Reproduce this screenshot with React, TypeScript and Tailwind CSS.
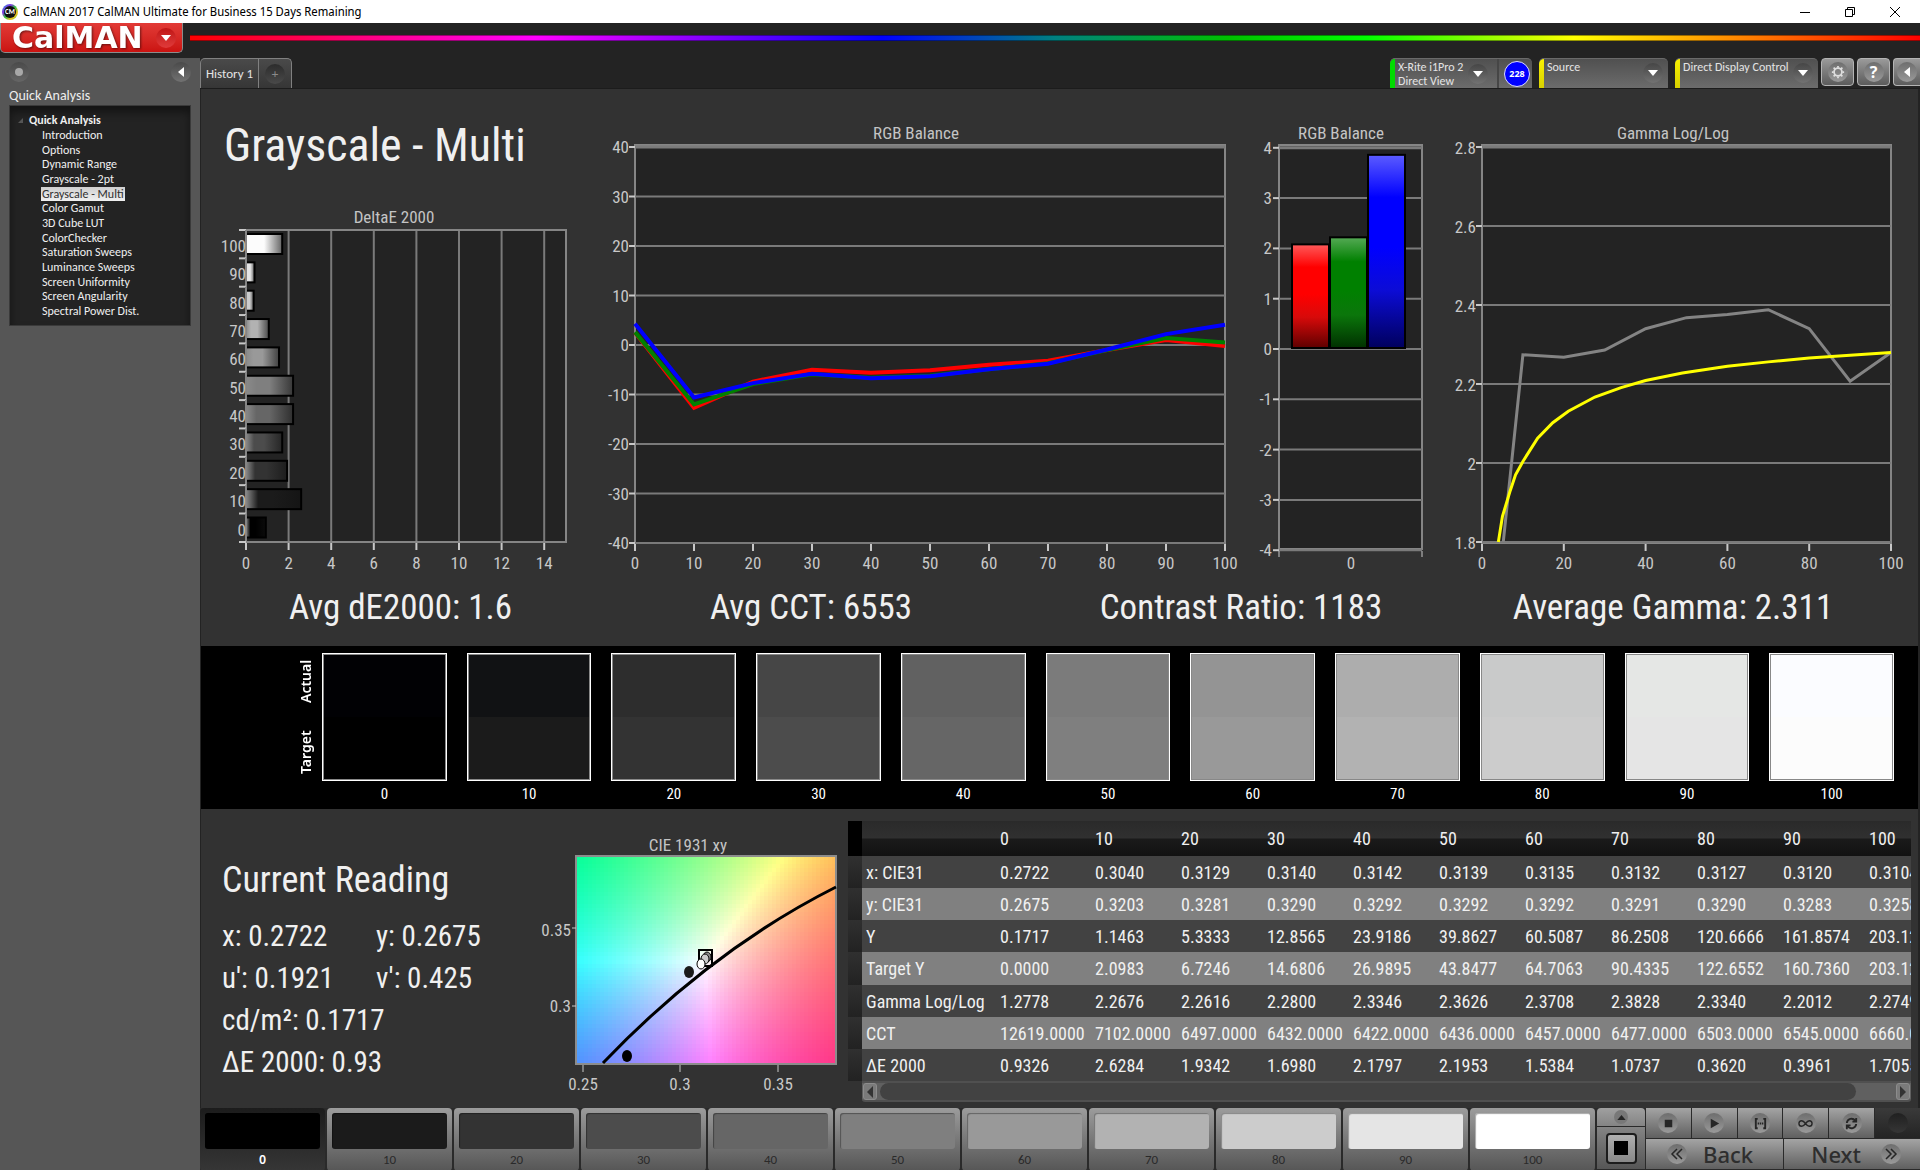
import type { ReactNode } from "react";

const navItems = [
  "Introduction",
  "Options",
  "Dynamic Range",
  "Grayscale - 2pt",
  "Grayscale - Multi",
  "Color Gamut",
  "3D Cube LUT",
  "ColorChecker",
  "Saturation Sweeps",
  "Luminance Sweeps",
  "Screen Uniformity",
  "Screen Angularity",
  "Spectral Power Dist.",
];

const levels = [
  { level: 0, actual: "#010104", target: "#000000", deltaE: 0.93 },
  { level: 10, actual: "#111214", target: "#1b1b1b", deltaE: 2.59 },
  { level: 20, actual: "#2d2d2d", target: "#333333", deltaE: 1.93 },
  { level: 30, actual: "#464646", target: "#4c4c4c", deltaE: 1.7 },
  { level: 40, actual: "#616161", target: "#666666", deltaE: 2.21 },
  { level: 50, actual: "#7b7b7b", target: "#7f7f7f", deltaE: 2.21 },
  { level: 60, actual: "#949494", target: "#999999", deltaE: 1.55 },
  { level: 70, actual: "#adadad", target: "#b2b2b2", deltaE: 1.07 },
  { level: 80, actual: "#c9caca", target: "#cccccc", deltaE: 0.36 },
  { level: 90, actual: "#e5e7e5", target: "#e5e5e5", deltaE: 0.4 },
  { level: 100, actual: "#fbfcff", target: "#fcfcfc", deltaE: 1.7 },
];

const readings = [
  { label: "x: CIE31", values: ["0.2722", "0.3040", "0.3129", "0.3140", "0.3142", "0.3139", "0.3135", "0.3132", "0.3127", "0.3120", "0.3104"] },
  { label: "y: CIE31", values: ["0.2675", "0.3203", "0.3281", "0.3290", "0.3292", "0.3292", "0.3292", "0.3291", "0.3290", "0.3283", "0.3258"] },
  { label: "Y", values: ["0.1717", "1.1463", "5.3333", "12.8565", "23.9186", "39.8627", "60.5087", "86.2508", "120.6666", "161.8574", "203.1234"] },
  { label: "Target Y", values: ["0.0000", "2.0983", "6.7246", "14.6806", "26.9895", "43.8477", "64.7063", "90.4335", "122.6552", "160.7360", "203.1234"] },
  { label: "Gamma Log/Log", values: ["1.2778", "2.2676", "2.2616", "2.2800", "2.3346", "2.3626", "2.3708", "2.3828", "2.3340", "2.2012", "2.2749"] },
  { label: "CCT", values: ["12619.0000", "7102.0000", "6497.0000", "6432.0000", "6422.0000", "6436.0000", "6457.0000", "6477.0000", "6503.0000", "6545.0000", "6660.0000"] },
  { label: "ΔE 2000", values: ["0.9326", "2.6284", "1.9342", "1.6980", "2.1797", "2.1953", "1.5384", "1.0737", "0.3620", "0.3961", "1.7055"] },
];

const balance = [
  { color: "#ff0000", values: [2.5, -12.7, -7.4, -5, -5.6, -5.1, -4, -3.2, -1, 1, -0.2] },
  { color: "#008000", values: [2.6, -12, -7.9, -5.9, -6.6, -6.2, -4.9, -3.7, -1, 1.4, 0.5] },
  { color: "#0000ff", values: [4.3, -10.6, -7.7, -5.8, -6.7, -6.3, -4.9, -3.8, -0.9, 2.2, 4.1] },
];

const gammaMeasured: [number, number][] = [
  [5.2, 1.8], [10, 2.274], [20, 2.268], [30, 2.286], [40, 2.34], [50, 2.368],
  [60, 2.376], [70, 2.388], [80, 2.34], [90, 2.207], [100, 2.28],
];

const gammaTarget: [number, number][] = [
  [4, 1.8], [5, 1.865], [6.9, 1.93], [8.2, 1.97], [10, 2.004], [13.6, 2.063], [17.3, 2.102], [21.1, 2.131],
  [27.6, 2.167], [34, 2.191], [40, 2.209], [49, 2.228], [60, 2.245], [70, 2.256], [80, 2.266], [90, 2.273], [100, 2.28],
];

function ChartTitle({ x, y, children }: { x: number; y: number; children: ReactNode }) {
  return (
    <text x={x} y={y} textAnchor="middle" className="fill-[#c4c4c4] text-[17px]">
      {children}
    </text>
  );
}

function Tick({ x, y, anchor = "middle", children }: { x: number; y: number; anchor?: "middle" | "end"; children: ReactNode }) {
  return (
    <text x={x} y={y} textAnchor={anchor} className="fill-[#c8c8c8] text-[17px]">
      {children}
    </text>
  );
}

function DeltaEChart() {
  const left = 45;
  const top = 25;
  const row = 28.35;
  const unit = 21.3;
  return (
    <svg viewBox="0 0 399 375" className="block w-full">
      <defs>
        {levels.map((l) => (
          <linearGradient key={l.level} id={`bar-${l.level}`}>
            <stop offset="0" stopColor={l.level > 70 ? l.target : "#8a8a8a"} />
            <stop offset="0.22" stopColor={l.target} />
            <stop offset="0.5" stopColor={l.target} />
            <stop offset="1" stopColor={l.target} stopOpacity="0.35" />
          </linearGradient>
        ))}
      </defs>
      <ChartTitle x={193} y={18}>DeltaE 2000</ChartTitle>
      <rect x={left} y={top} width={320} height={312} fill="#232323" />
      {[2, 4, 6, 8, 10, 12, 14].map((v) => (
        <line key={v} x1={left + v * unit} x2={left + v * unit} y1={top} y2={top + 312} stroke="#7a7a7a" strokeWidth="2" />
      ))}
      <rect x={left} y={top} width={320} height={312} fill="none" stroke="#858585" strokeWidth="2" />
      {[...levels].reverse().map((l, i) => (
        <g key={l.level}>
          <line x1={left - 7} x2={left} y1={top + i * row} y2={top + i * row} stroke="#c8c8c8" strokeWidth="2" />
          <rect x={left} y={top + 4 + i * row} width={l.deltaE * unit} height={20} fill="#111111" />
          <rect
            x={left}
            y={top + 4 + i * row}
            width={l.deltaE * unit}
            height={20}
            fill={`url(#bar-${l.level})`}
            stroke="#000000"
            strokeWidth="2"
          />
          <line x1={left} x2={left} y1={top + i * row} y2={top + i * row + row} stroke="#858585" strokeWidth="2" />
          <Tick x={left} y={top + 22 + i * row} anchor="end">{l.level}</Tick>
        </g>
      ))}
      <line x1={left - 7} x2={left} y1={top + 312} y2={top + 312} stroke="#c8c8c8" strokeWidth="2" />
      {[0, 2, 4, 6, 8, 10, 12, 14].map((v) => (
        <g key={v}>
          <line x1={left + v * unit} x2={left + v * unit} y1={top + 313} y2={top + 320} stroke="#c8c8c8" strokeWidth="2" />
          <Tick x={left + v * unit} y={364}>{v}</Tick>
        </g>
      ))}
    </svg>
  );
}

function BalanceChart() {
  const px = (v: number) => 35 + v * 5.9;
  const py = (v: number) => 235 - v * 4.95;
  return (
    <svg viewBox="0 0 640 470" className="block w-full">
      <ChartTitle x={316} y={29}>RGB Balance</ChartTitle>
      <rect x={35} y={35} width={590} height={398} fill="#232323" stroke="#858585" strokeWidth="2" />
      {[40, 30, 20, 10, 0, -10, -20, -30, -40].map((v) => (
        <g key={v}>
          <line x1={35} x2={625} y1={py(v)} y2={py(v)} stroke="#7a7a7a" strokeWidth={v === 40 ? 3 : 2} />
          <line x1={29} x2={35} y1={py(v)} y2={py(v)} stroke="#c8c8c8" strokeWidth="2" />
          <Tick x={29} y={py(v) + 6} anchor="end">{v}</Tick>
        </g>
      ))}
      {[0, 10, 20, 30, 40, 50, 60, 70, 80, 90, 100].map((v) => (
        <g key={v}>
          <line x1={px(v)} x2={px(v)} y1={434} y2={441} stroke="#c8c8c8" strokeWidth="2" />
          <Tick x={px(v)} y={459}>{v}</Tick>
        </g>
      ))}
      {balance.map((s) => (
        <polyline
          key={s.color}
          points={s.values.map((v, i) => `${px(i * 10)},${py(v)}`).join(" ")}
          fill="none"
          stroke={s.color}
          strokeWidth="4"
        />
      ))}
    </svg>
  );
}

function BalanceBars() {
  const py = (v: number) => 239 - v * 50.3;
  const bars = [
    { id: "red", x: 52, value: 2.08, light: "#ff5a5a", main: "#ff0000", mid: "#d80a0a", dark: "#5e0000" },
    { id: "green", x: 90, value: 2.22, light: "#55aa55", main: "#008000", mid: "#0b760b", dark: "#003000" },
    { id: "blue", x: 128, value: 3.86, light: "#5c5cff", main: "#0000ff", mid: "#0c0cd6", dark: "#00005c" },
  ];
  return (
    <svg viewBox="0 0 210 470" className="block w-full">
      <defs>
        {bars.map((b) => (
          <linearGradient key={b.id} id={b.id} x1="0" y1="0" x2="0" y2="1">
            <stop offset="0" stopColor={b.light} />
            <stop offset="0.22" stopColor={b.main} />
            <stop offset="0.48" stopColor={b.main} />
            <stop offset="0.7" stopColor={b.mid} />
            <stop offset="1" stopColor={b.dark} />
          </linearGradient>
        ))}
      </defs>
      <ChartTitle x={101} y={29}>RGB Balance</ChartTitle>
      <rect x={39} y={35} width={143} height={404} fill="#232323" stroke="#858585" strokeWidth="2" />
      {[4, 3, 2, 1, 0, -1, -2, -3, -4].map((v) => (
        <g key={v}>
          <line x1={39} x2={182} y1={py(v)} y2={py(v)} stroke="#7a7a7a" strokeWidth={v === 4 ? 3 : 2} />
          <line x1={33} x2={39} y1={py(v)} y2={py(v)} stroke="#c8c8c8" strokeWidth="2" />
          <Tick x={32} y={py(v) + 6} anchor="end">{v}</Tick>
        </g>
      ))}
      {bars.map((b) => (
        <rect key={b.id} x={b.x} y={py(b.value)} width={37} height={238 - py(b.value)} fill={`url(#${b.id})`} stroke="#000000" strokeWidth="2" />
      ))}
      <path d="M39 441v6M182 441v6" stroke="#c8c8c8" strokeWidth="1" />
      <Tick x={111} y={459}>0</Tick>
    </svg>
  );
}

function GammaChart() {
  const px = (v: number) => 32 + v * 4.09;
  const py = (v: number) => 37 + (2.8 - v) * 395;
  const line = (points: [number, number][]) => points.map(([x, y]) => `${px(x)},${py(y)}`).join(" ");
  return (
    <svg viewBox="0 0 468 470" className="block w-full">
      <ChartTitle x={223} y={29}>Gamma Log/Log</ChartTitle>
      <rect x={32} y={35} width={409} height={398} fill="#232323" stroke="#858585" strokeWidth="2" />
      {[2.8, 2.6, 2.4, 2.2, 2, 1.8].map((v) => (
        <g key={v}>
          <line x1={32} x2={441} y1={py(v)} y2={py(v)} stroke="#7a7a7a" strokeWidth={v === 2.8 ? 3 : 2} />
          <line x1={26} x2={32} y1={py(v)} y2={py(v)} stroke="#c8c8c8" strokeWidth="2" />
          <Tick x={26} y={py(v) + 7} anchor="end">{v}</Tick>
        </g>
      ))}
      {[0, 20, 40, 60, 80, 100].map((v) => (
        <g key={v}>
          <line x1={px(v)} x2={px(v)} y1={434} y2={441} stroke="#c8c8c8" strokeWidth="2" />
          <Tick x={px(v)} y={459}>{v}</Tick>
        </g>
      ))}
      <polyline points={line(gammaMeasured)} fill="none" stroke="#848484" strokeWidth="3" />
      <polyline points={line(gammaTarget)} fill="none" stroke="#ffff00" strokeWidth="3" />
    </svg>
  );
}

// xy chromaticity to linear sRGB, scaled so the strongest channel is full
function xyToRgb(x: number, y: number) {
  const X = x / y;
  const Z = (1 - x - y) / y;
  const rgb = [
    3.2406 * X - 1.5372 - 0.4986 * Z,
    -0.9689 * X + 1.8758 + 0.0415 * Z,
    0.0557 * X - 0.204 + 1.057 * Z,
  ];
  const max = Math.max(...rgb);
  return `rgb(${rgb.map((c) => Math.round((Math.max(c, 0) / max) * 255)).join(",")})`;
}

const CELL = 4;
const cieCells = Array.from({ length: 65 * 52 }, (_, i) => {
  const x = (i % 65) * CELL;
  const y = Math.floor(i / 65) * CELL;
  return { x, y, fill: xyToRgb(0.2465 + (x + 2) / 1950, 0.3962 - (y + 2) / 1560) };
});

function CieChart() {
  return (
    <svg viewBox="-20 0 320 280" className="block w-full">
      <ChartTitle x={140} y={34}>CIE 1931 xy</ChartTitle>
      <g shapeRendering="crispEdges">
        {cieCells.map((c) => (
          <rect key={`${c.x}-${c.y}`} x={28 + c.x} y={39 + c.y} width={CELL} height={CELL} fill={c.fill} />
        ))}
      </g>
      <rect x={28} y={39} width={260} height={208} fill="none" stroke="#8c8c8c" strokeWidth="2" />
      <path d="M55 246Q163 133 288 70" fill="none" stroke="#000000" strokeWidth="3" />
      <rect x={151} y={133} width={13} height={16} fill="none" stroke="#000000" strokeWidth="2" />
      <ellipse cx={159} cy={140} rx={4} ry={5} fill="#8c8c8c" stroke="#000000" />
      <ellipse cx={157} cy={142} rx={4} ry={5} fill="#cccccc" stroke="#000000" />
      <ellipse cx={153} cy={147} rx={4} ry={5} fill="#ffffff" stroke="#000000" />
      <ellipse cx={141} cy={155} rx={5} ry={6} fill="#1b1b1b" />
      <ellipse cx={79} cy={239} rx={5} ry={6} fill="#000000" />
      <path d="M24 111h4M24 189h4M35 248v7M132 248v7M230 248v7" stroke="#c8c8c8" strokeWidth="1" />
      <Tick x={23} y={119} anchor="end">0.35</Tick>
      <Tick x={23} y={195} anchor="end">0.3</Tick>
      <Tick x={35} y={273}>0.25</Tick>
      <Tick x={132} y={273}>0.3</Tick>
      <Tick x={230} y={273}>0.35</Tick>
    </svg>
  );
}

function Knob({ children }: { children?: ReactNode }) {
  return (
    <span className="flex size-5 shrink-0 items-center justify-center rounded-full bg-linear-to-b from-[#6e6e6e] to-[#9a9a9a] text-[#262626]">
      {children}
    </span>
  );
}

function DarkKnob({ children }: { children: ReactNode }) {
  return (
    <span className="flex size-5 shrink-0 items-center justify-center rounded-full bg-linear-to-b from-[#464646] to-[#727272] text-white">
      {children}
    </span>
  );
}

function DownArrow() {
  return (
    <svg viewBox="0 0 10 6" className="h-[6px] w-[10px]">
      <path d="M0 0h10L5 6z" fill="currentColor" />
    </svg>
  );
}

function TitleBar() {
  return (
    <div className="flex h-[23px] items-center bg-white text-black">
      <svg viewBox="0 0 16 16" className="ml-[2px] size-4">
        <defs>
          <linearGradient id="ring" x1="0" y1="0" x2="1" y2="1">
            <stop offset="0" stopColor="#20b0e0" />
            <stop offset="0.3" stopColor="#8030e0" />
            <stop offset="0.5" stopColor="#30c040" />
            <stop offset="0.75" stopColor="#f0c020" />
            <stop offset="1" stopColor="#40d040" />
          </linearGradient>
        </defs>
        <circle cx="8" cy="8" r="8" fill="url(#ring)" />
        <circle cx="8" cy="8" r="6" fill="#101010" />
        <text x="8" y="10" textAnchor="middle" fill="#ffffff" className="text-[7px] font-bold">CM</text>
      </svg>
      <h1 className="ml-[5px] flex-1 font-['Noto_Sans_Display','Open_Sans',sans-serif] text-xs">CalMAN 2017 CalMAN Ultimate for Business 15 Days Remaining</h1>
      <button aria-label="Minimize" className="flex w-[45px] justify-center">
        <svg viewBox="0 0 10 10" className="size-[10px]"><path d="M0 5.5h10" stroke="#000" /></svg>
      </button>
      <button aria-label="Restore" className="flex w-[45px] justify-center">
        <svg viewBox="0 0 10 10" className="size-[10px]"><path d="M.5 2.5h7v7h-7zM2.5 2.5v-2h7v7h-2" fill="none" stroke="#000" /></svg>
      </button>
      <button aria-label="Close" className="mr-[2px] flex w-[46px] justify-center">
        <svg viewBox="0 0 10 10" className="size-[10px]"><path d="M0 0l10 10M10 0L0 10" stroke="#000" /></svg>
      </button>
    </div>
  );
}

function LogoBar() {
  return (
    <div className="flex h-[35px] items-start gap-[7px] bg-[#232323]">
      <button className="flex h-[30px] w-[183px] items-center justify-between rounded-b-[5px] border-x border-b border-[#8c8c8c] bg-linear-to-b from-[#e23a36] to-[#cb1210] pr-[6px] pl-[11px]">
        <span className="font-['DejaVu_Sans',sans-serif] text-[30px] leading-[28px] font-bold text-white drop-shadow-[1px_1px_1px_rgba(0,0,0,0.5)]">CalMAN</span>
        <span className="flex size-5 items-center justify-center rounded-full bg-linear-to-b from-[#c01414] to-[#e03a3a] text-white">
          <DownArrow />
        </span>
      </button>
      <div className="mt-3 h-[6px] flex-1 border-y border-black/40 bg-[linear-gradient(90deg,#ff0000_0%,#ff00ff_20%,#0000ff_40%,#008080_50%,#00c000_60%,#00ff00_68%,#ffff00_80%,#ff8000_90%,#ff0000_100%)]" />
    </div>
  );
}

function Sidebar() {
  return (
    <aside className="w-[200px] shrink-0 bg-[#565656] px-[9px] pt-1">
      <div className="flex items-center justify-between">
        <button aria-label="Record" className="flex size-5 items-center justify-center rounded-full bg-linear-to-b from-[#4a4a4a] to-[#666666]">
          <span className="size-2 rounded-full bg-[#a8a8a8]" />
        </button>
        <button aria-label="Collapse sidebar" className="flex size-5 items-center justify-center rounded-full bg-linear-to-b from-[#4a4a4a] to-[#727272]">
          <svg viewBox="0 0 6 10" className="h-[10px] w-[6px]"><path d="M6 0v10L0 5z" fill="#fff" /></svg>
        </button>
      </div>
      <h2 className="mt-[5px] text-[14px] leading-[18px] text-[#eeeeee]">Quick Analysis</h2>
      <nav className="h-[221px] border border-[#3a3a3a] bg-[#232323] pt-[6px] text-[12px] leading-[14px] text-[#f0f0f0] shadow-[inset_0_6px_8px_rgba(0,0,0,0.45)]">
        <div className="flex items-center gap-[6px] pl-2 leading-4 font-bold">
          <svg viewBox="0 0 5 5" className="size-[5px]"><path d="M5 0v5H0z" fill="#555" /></svg>
          Quick Analysis
        </div>
        <ul className="flex h-[190px] flex-col items-start justify-between pl-[31px]">
          {navItems.map((item) => (
            <li key={item}>
              <a
                href="#"
                className={
                  item === "Grayscale - Multi"
                    ? "block bg-linear-to-b from-[#d0d0d0] to-[#f0f0f0] px-px text-[#303030]"
                    : "block px-px"
                }
              >
                {item}
              </a>
            </li>
          ))}
        </ul>
      </nav>
    </aside>
  );
}

function TabRow() {
  return (
    <div className="flex h-[31px] items-stretch border-b border-[#1c1c1c] bg-[#232323] text-[13px] text-[#e4e4e4]">
      <div className="flex rounded-t-[5px] border-x border-t border-[#808080] bg-linear-to-b from-[#4a4a4a] to-[#363636]">
        <button className="w-[58px] border-r border-[#808080]">History 1</button>
        <button aria-label="Add history" className="flex w-8 items-center justify-center">
          <span className="flex size-5 items-center justify-center rounded-full bg-linear-to-b from-[#2c2c2c] to-[#4a4a4a] text-[#8a8a8a]">+</span>
        </button>
      </div>
      <div className="ml-auto flex items-stretch leading-[14px] whitespace-nowrap">
        <div className="flex w-[142px] rounded-t-[5px] border-t border-[#6a6a6a] bg-linear-to-b from-[#505050] to-[#6c6c6c]">
          <span className="w-[5px] shrink-0 rounded-tl-[5px] bg-[#00dc00]" />
          <button className="flex flex-1 items-center justify-between border-r-2 border-[#464646] pr-[9px] pl-[3px] text-left text-[12px]">
            <span>X-Rite i1Pro 2<br />Direct View</span>
            <DarkKnob><DownArrow /></DarkKnob>
          </button>
          <span className="m-[2px] ml-[5px] flex size-[26px] shrink-0 items-center justify-center rounded-full border border-[#dcdcff] bg-[#0000ff] font-['Open_Sans',sans-serif] text-[9px] font-bold text-white">228</span>
        </div>
        <button className="ml-[7px] flex w-[129px] rounded-t-[5px] border-t border-[#6a6a6a] bg-linear-to-b from-[#505050] to-[#6c6c6c] text-left">
          <span className="h-full w-[5px] shrink-0 rounded-tl-[5px] bg-linear-to-b from-[#f8f000] to-[#d8d000]" />
          <span className="flex-1 pt-px pl-[3px] text-[12px]">Source</span>
          <span className="mt-1 mr-[5px]"><DarkKnob><DownArrow /></DarkKnob></span>
        </button>
        <button className="ml-[7px] flex w-[143px] rounded-t-[5px] border-t border-[#6a6a6a] bg-linear-to-b from-[#505050] to-[#6c6c6c] text-left">
          <span className="h-full w-[5px] shrink-0 rounded-tl-[5px] bg-linear-to-b from-[#f8f000] to-[#d8d000]" />
          <span className="min-w-0 flex-1 pt-px pl-[3px] text-[12px]">Direct Display Control</span>
          <span className="mt-1 mr-[5px]"><DarkKnob><DownArrow /></DarkKnob></span>
        </button>
        <div className="ml-[3px] flex h-7 gap-[3px]">
          <button aria-label="Settings" className="flex w-[33px] items-center justify-center rounded-[4px] border border-[#b4b4b4] bg-linear-to-b from-[#9a9a9a] to-[#5c5c5c]">
            <Knob>
              <svg viewBox="0 0 16 16" className="size-[14px]" fill="none" stroke="#dedede">
                <circle cx="8" cy="8" r="4.5" strokeWidth="2" />
                <path d="M8 1v2M8 13v2M1 8h2M13 8h2M3 3l2 2M11 11l2 2M13 3l-2 2M5 11l-2 2" strokeWidth="2" />
              </svg>
            </Knob>
          </button>
          <button aria-label="Help" className="flex w-[33px] items-center justify-center rounded-[4px] border border-[#b4b4b4] bg-linear-to-b from-[#9a9a9a] to-[#5c5c5c]">
            <Knob><span className="font-['Open_Sans',sans-serif] text-base font-bold text-white">?</span></Knob>
          </button>
          <button aria-label="Collapse toolbar" className="flex w-[27px] items-center justify-center rounded-l-[4px] border-y border-l border-[#b4b4b4] bg-linear-to-b from-[#9a9a9a] to-[#5c5c5c]">
            <Knob>
              <svg viewBox="0 0 6 10" className="h-[10px] w-[6px]"><path d="M6 0v10L0 5z" fill="#fff" /></svg>
            </Knob>
          </button>
        </div>
      </div>
    </div>
  );
}

function SwatchBand() {
  return (
    <div className="flex h-[163px] bg-black pt-[7px] pr-6 text-white">
      <div className="flex h-[128px] w-[121px] justify-end pr-2 font-['Noto_Sans',sans-serif] text-[14px] leading-4 font-semibold">
        <div className="flex rotate-180 justify-between pt-[7px] pb-[7px] [writing-mode:vertical-rl]">
          <span>Target</span>
          <span>Actual</span>
        </div>
      </div>
      <div className="grid flex-1 grid-cols-11 gap-5">
        {levels.map((l) => (
          <figure key={l.level} className="text-center">
            <div className="flex h-[128px] flex-col border border-white shadow-[inset_0_0_0_1px_#888888]">
              <div className="m-px mb-0 flex-1" style={{ backgroundColor: l.actual }} />
              <div className="m-px mt-0 flex-1" style={{ backgroundColor: l.target }} />
            </div>
            <figcaption className="text-[15px] leading-[26px]">{l.level}</figcaption>
          </figure>
        ))}
      </div>
    </div>
  );
}

function CurrentReading() {
  return (
    <div className="pt-[49px] pl-[21px] text-[29px] leading-[42px] text-[#f0f0f0]">
      <h3 className="pb-[13px] text-4xl leading-[44px]">Current Reading</h3>
      <div className="grid grid-cols-[154px_1fr]">
        <span>x: 0.2722</span>
        <span>y: 0.2675</span>
        <span>u': 0.1921</span>
        <span>v': 0.425</span>
      </div>
      <p>cd/m²: 0.1717</p>
      <p>ΔE 2000: 0.93</p>
    </div>
  );
}

function ReadingsTable() {
  return (
    <div className="min-w-0 pt-3 pr-[7px]">
      <div className="overflow-hidden">
        <table className="h-[260px] w-[1103px] table-fixed border-collapse text-[18px] leading-7 text-[#f0f0f0]">
          <colgroup>
            <col className="w-[14px]" />
            <col className="w-[134px]" />
            <col className="w-[95px]" />
            {levels.slice(1).map((l) => (
              <col key={l.level} className="w-[86px]" />
            ))}
          </colgroup>
          <thead>
            <tr className="h-[35px] bg-[linear-gradient(180deg,#2a2a2a_0%,#303030_48%,#1a1a1a_52%,#121212_100%)]">
              <td className="bg-black" />
              <td />
              {levels.map((l) => (
                <th key={l.level} scope="col" className="pl-1 text-left font-normal">{l.level}</th>
              ))}
            </tr>
          </thead>
          <tbody>
            {readings.map((r) => (
              <tr key={r.label} className="odd:bg-[#424242] even:bg-[#808080]">
                <td className="bg-linear-to-b from-[#303030] to-[#222222]" />
                <th scope="row" className="pt-[2px] pl-1 text-left font-normal whitespace-nowrap">{r.label}</th>
                {r.values.map((v, i) => (
                  <td key={i} className="pt-[2px] pl-1">{v}</td>
                ))}
              </tr>
            ))}
          </tbody>
        </table>
      </div>
      <div className="ml-[14px] flex h-[21px] items-center justify-between rounded-b-[3px] border-y-2 border-[#505050] bg-[#606060] px-px">
        <button aria-label="Scroll left" className="flex h-[17px] w-[14px] items-center justify-center rounded-[3px] border border-[#8c8c8c] bg-[#7a7a7a]">
          <svg viewBox="0 0 6 12" className="h-3 w-[6px]"><path d="M6 0v12L0 6z" fill="#333" /></svg>
        </button>
        <div className="mr-[40px] ml-[3px] h-[17px] flex-1 rounded-full bg-[#424242]" />
        <button aria-label="Scroll right" className="flex h-[17px] w-[14px] items-center justify-center rounded-[3px] border border-[#8c8c8c] bg-[#7a7a7a]">
          <svg viewBox="0 0 6 12" className="h-3 w-[6px]"><path d="M0 0v12L6 6z" fill="#333" /></svg>
        </button>
      </div>
    </div>
  );
}

const transport = [
  { label: "Stop", icon: <path d="M4 4h8v8H4z" fill="currentColor" /> },
  { label: "Play", icon: <path d="M4 3v10l9-5z" fill="currentColor" /> },
  {
    label: "Read series",
    icon: (
      <>
        <path d="M5 3H3v10h2M11 3h2v10h-2" fill="none" stroke="currentColor" strokeWidth="2" />
        <path d="M5 7h1.500v2H5zM7.250 7h1.500v2h-1.500zM9.500 7H11v2H9.500z" fill="currentColor" />
      </>
    ),
  },
  {
    label: "Read continuously",
    icon: (
      <path
        d="M8 8C6.500 6 5.500 5 4 5a3 3 0 000 6c1.500 0 2.500-1 4-3s2.500-3 4-3a3 3 0 010 6c-1.500 0-2.500-1-4-3z"
        fill="none"
        stroke="currentColor"
        strokeWidth="1.500"
      />
    ),
  },
  {
    label: "Refresh",
    icon: (
      <path
        d="M3 7.500A5 5 0 0112 5M13 2v4H9M13 8.500A5 5 0 014 11M3 14v-4h4"
        fill="none"
        stroke="currentColor"
        strokeWidth="2"
      />
    ),
  },
];

function BottomBar() {
  return (
    <footer className="mt-auto flex h-[62px] bg-[#2a2a2a] pb-px">
      <div className="grid flex-1 grid-cols-11 gap-[2px] pr-[2px]">
        {levels.map((l) => (
          <button
            key={l.level}
            className={
              l.level === 0
                ? "flex flex-col rounded-[4px] bg-linear-to-b from-[#1c1c1c] to-[#363636] px-[5px] pt-[5px] text-[13px] leading-[22px] font-bold text-white"
                : "flex flex-col rounded-[4px] bg-linear-to-b from-[#9c9c9c] to-[#565656] px-[5px] pt-[5px] text-[13px] leading-[22px] text-[#2a2a2a]"
            }
          >
            <span
              className="h-9 w-full rounded-[3px] shadow-[inset_1px_1px_1px_rgba(0,0,0,0.35)]"
              style={{ backgroundColor: l.level === 100 ? "#ffffff" : l.target }}
            />
            <span className="w-full text-center">{l.level}</span>
          </button>
        ))}
      </div>
      <div className="flex w-12 flex-col gap-px">
        <button aria-label="Expand" className="flex h-[18px] items-center justify-center rounded-t-[4px] bg-linear-to-b from-[#a0a0a0] to-[#848484]">
          <span className="flex size-[14px] items-center justify-center rounded-full bg-[#787878]">
            <svg viewBox="0 0 10 6" className="h-[5px] w-[9px]"><path d="M0 6h10L5 0z" fill="#262626" /></svg>
          </span>
        </button>
        <button aria-label="Pattern window" className="flex flex-1 items-center justify-center bg-linear-to-b from-[#848484] to-[#565656]">
          <span className="flex size-[31px] items-center justify-center rounded-[4px] border-2 border-[#1c1c1c] bg-linear-to-b from-[#b0b0b0] to-[#888888]">
            <span className="size-[14px] bg-black" />
          </span>
        </button>
      </div>
      <div className="ml-px flex w-[274px] flex-col gap-px">
        <div className="grid h-[30px] grid-cols-6 gap-px">
          {transport.map((t) => (
            <button key={t.label} aria-label={t.label} className="flex items-center justify-center bg-linear-to-b from-[#a4a4a4] to-[#606060]">
              <Knob>
                <svg viewBox="0 0 16 16" className="size-[15px]">{t.icon}</svg>
              </Knob>
            </button>
          ))}
          <button aria-label="Status" className="flex items-center justify-center bg-linear-to-b from-[#3a3a3a] to-[#242424]">
            <span className="size-5 rounded-full bg-linear-to-b from-[#202020] to-[#363636]" />
          </button>
        </div>
        <div className="grid flex-1 grid-cols-2 gap-px font-['Noto_Sans',sans-serif] text-[22px] leading-[30px] font-medium text-[#2e2e2e]">
          <button className="flex items-center gap-4 bg-linear-to-b from-[#a4a4a4] to-[#606060] pl-[21px]">
            <Knob>
              <svg viewBox="0 0 16 16" className="size-4"><path d="M8 3L3 8l5 5M13 3L8 8l5 5" fill="none" stroke="currentColor" strokeWidth="1.500" /></svg>
            </Knob>
            Back
          </button>
          <button className="flex items-center justify-end gap-5 bg-linear-to-b from-[#a4a4a4] to-[#606060] pr-[19px]">
            Next
            <Knob>
              <svg viewBox="0 0 16 16" className="size-4"><path d="M3 3l5 5-5 5M8 3l5 5-5 5" fill="none" stroke="currentColor" strokeWidth="1.500" /></svg>
            </Knob>
          </button>
        </div>
      </div>
    </footer>
  );
}

export default function App() {
  return (
    <div className="flex min-h-screen flex-col bg-[#232323] font-['Carlito','Lato',sans-serif]">
      <TitleBar />
      <LogoBar />
      <div className="flex flex-1">
        <Sidebar />
        <div className="flex min-w-0 flex-1 flex-col">
          <TabRow />
          <main className="flex-1 border-r-2 border-l border-[#232323] bg-[#323232] font-['Roboto_Condensed','Roboto',sans-serif]">
            <div className="grid grid-cols-[minmax(0,399fr)_minmax(0,640fr)_minmax(0,210fr)_minmax(0,468fr)] pt-[21px]">
              <div>
                <h2 className="h-[95px] pl-[23px] text-[46px] leading-[70px] text-[#f0f0f0]">Grayscale - Multi</h2>
                <DeltaEChart />
              </div>
              <BalanceChart />
              <BalanceBars />
              <GammaChart />
            </div>
            <div className="grid grid-cols-[399fr_422fr_438fr_426fr_32fr] pb-[10px] text-center text-[35px] leading-[56px] text-[#f0f0f0]">
              <p>Avg dE2000: 1.6</p>
              <p>Avg CCT: 6553</p>
              <p>Contrast Ratio: 1183</p>
              <p>Average Gamma: 2.311</p>
            </div>
            <SwatchBand />
            <div className="grid grid-cols-[minmax(0,327fr)_minmax(0,320fr)_minmax(0,1070fr)]">
              <CurrentReading />
              <div className="pt-[8px]">
                <CieChart />
              </div>
              <ReadingsTable />
            </div>
          </main>
          <BottomBar />
        </div>
      </div>
    </div>
  );
}
